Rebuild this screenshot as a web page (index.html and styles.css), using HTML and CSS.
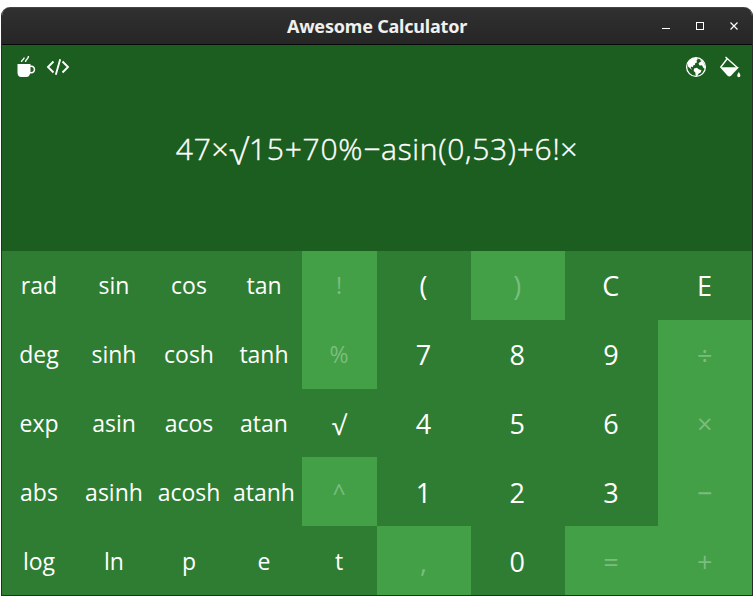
FILE: index.html
```html
<!DOCTYPE html>
<html lang="en">
<head>
<meta charset="utf-8">
<title>Awesome Calculator</title>
<link rel="stylesheet" href="styles.css">
</head>
<body>
<main class="window">
  <header class="titlebar">
    <h1>Awesome Calculator</h1>
    <svg class="controls" width="90" height="20" viewBox="0 0 90 20" fill="none" stroke="#fff">
      <path d="M9 13.500h8" stroke-width="1"/>
      <rect x="43.500" y="7.500" width="7" height="7"/>
      <path d="M77.500 7.500l7 7m0-7l-7 7" stroke-width="1.200"/>
    </svg>
  </header>
  <section class="display">
    <nav class="tools">
      <svg width="20" height="24" viewBox="0 0 20 24">
        <path fill="#fff" fill-rule="evenodd" d="M1.500 9h13v1.500h.8c5.200 0 5.200 8 0 8h-1.200c-.5 2.500-1.800 3.500-3.800 3.500H5.500c-3 0-4-2-4-4.500zm13 3v5h.8c3.200 0 3.200-5 0-5z"/>
        <path fill="none" stroke="#fff" stroke-width="1.400" d="M5.500 7c0-2.500 2.500-2 2.700-4.500M9.500 7c0-3 3-2.500 3-6"/>
      </svg>
      <svg width="24" height="24" viewBox="0 0 24 24" fill="none" stroke="#fff" stroke-width="1.900">
        <path d="M7.500 6.500L2 12l5.500 5.500M16.500 6.500L22 12l-5.500 5.500M14.200 4.200L9.800 19.800"/>
      </svg>
      <span class="spacer"></span>
      <svg width="22" height="22" viewBox="0 0 22 22">
        <circle cx="11" cy="11" r="9.400" fill="none" stroke="#fff" stroke-width="1.300"/>
        <path fill="#fff" d="M2.500 7C4.500 3.500 8 1.500 12 1.700l.6 1.700-1.200 1.400.8 1.400-2 1-.4 1.700-1.700.6-.2 1.700-1.500-.7-.8 1.500 1.500 1.400-1-.1L3 10.500zM9 12.500l3-.8 1.700 1.500 2.800 1-.9 2.300-1.900 1-1.600 2.700-1.400-.5-.4-3.200L8.700 15zM15.500 3.500l2.300 1.800 2 3.900.3 3.300-1.600-.4-1.500-2.800-2.500.3-1-2 1.700-1.800 1.200.1-.9-1.300z"/>
      </svg>
      <svg width="23" height="24" viewBox="0 0 23 24">
        <path fill="none" stroke="#fff" stroke-width="1.400" d="M6.500 2L18.800 13M8 4L1.500 12.500"/>
        <path fill="#fff" d="M1 12.300h19l-8 8.500q-1.700 1.600-3.400 0z"/>
        <path fill="#fff" d="M19.800 17q3.200 4.600 0 5.200-3.200-.6 0-5.200z"/>
      </svg>
    </nav>
    <output class="expression">47×<span class="root">√</span>15+70%−asin(0,53)+6!×</output>
  </section>
  <section class="keys">
    <div class="pad functions">
      <button>rad</button><button>sin</button><button>cos</button><button>tan</button><button class="off">!</button>
      <button>deg</button><button>sinh</button><button>cosh</button><button>tanh</button><button class="off">%</button>
      <button>exp</button><button>asin</button><button>acos</button><button>atan</button><button><span class="root">√</span></button>
      <button>abs</button><button>asinh</button><button>acosh</button><button>atanh</button><button class="off">^</button>
      <button>log</button><button>ln</button><button>p</button><button>e</button><button>t</button>
    </div>
    <div class="pad numbers">
      <button>(</button><button class="off">)</button><button>C</button><button>E</button>
      <button>7</button><button>8</button><button>9</button><button class="off">÷</button>
      <button>4</button><button>5</button><button>6</button><button class="off">×</button>
      <button>1</button><button>2</button><button>3</button><button class="off">−</button>
      <button class="off">,</button><button>0</button><button class="off">=</button><button class="off">+</button>
    </div>
  </section>
</main>
</body>
</html>
```
FILE: styles.css
```css
* { box-sizing: border-box; }
body {
  margin: 0;
  padding: 7px 0 0 1px;
  background: #fff;
  color: #fff;
  font-family: "Open Sans", "Noto Sans", sans-serif;
}
.window {
  width: 752px;
  height: 589px;
  display: flex;
  flex-direction: column;
  overflow: hidden;
  border: 1px solid #2b2b2b;
  border-top: 0;
  border-radius: 9px 9px 0 0;
}
.titlebar {
  height: 38px;
  flex: none;
  display: grid;
  grid-template-columns: 1fr auto 1fr;
  align-items: center;
  background: linear-gradient(#303030, #262626);
  border-top: 1px solid #444;
  border-bottom: 1px solid #080808;
}
h1 {
  grid-column: 2;
  margin: 0;
  font: 700 18px/36px "Noto Sans", sans-serif;
  letter-spacing: -.2px;
  color: #f0f0ee;
}
.controls { justify-self: end; margin: -2px 9px 0 0; }
.display {
  height: 206px;
  flex: none;
  background: #1b5e20;
}
.tools {
  height: 44px;
  display: flex;
  align-items: center;
  padding: 0 10px 0 14px;
}
.tools svg + svg { margin-left: 10px; }
.tools .spacer + svg + svg { margin-left: 12px; }
.spacer { flex: 1; }
.expression {
  display: block;
  text-align: center;
  font-size: 30px;
  line-height: 120px;
  font-weight: 300;
  -webkit-text-stroke: .4px currentColor;
  letter-spacing: .72px;
  white-space: nowrap;
}
.root {
  font-size: 1.15em;
  line-height: 0;
  vertical-align: -.13em;
}
.keys {
  flex: 1;
  display: grid;
  grid-template-columns: 1fr 1fr;
  background: #2e7d32;
}
.pad { display: grid; grid-template-rows: repeat(5, 1fr); }
.functions { grid-template-columns: repeat(5, 1fr); font-size: 23px; }
.numbers { grid-template-columns: repeat(4, 1fr); font-size: 27px; }
button {
  min-width: 0;
  margin: 0;
  padding: 0 1px 0 0;
  border: 0;
  background: none;
  color: #fff;
  font: inherit;
  line-height: 30px;
}
.numbers button { padding-top: 2px; }
.off { background: #43a047; color: #7bbd7e; }
```
